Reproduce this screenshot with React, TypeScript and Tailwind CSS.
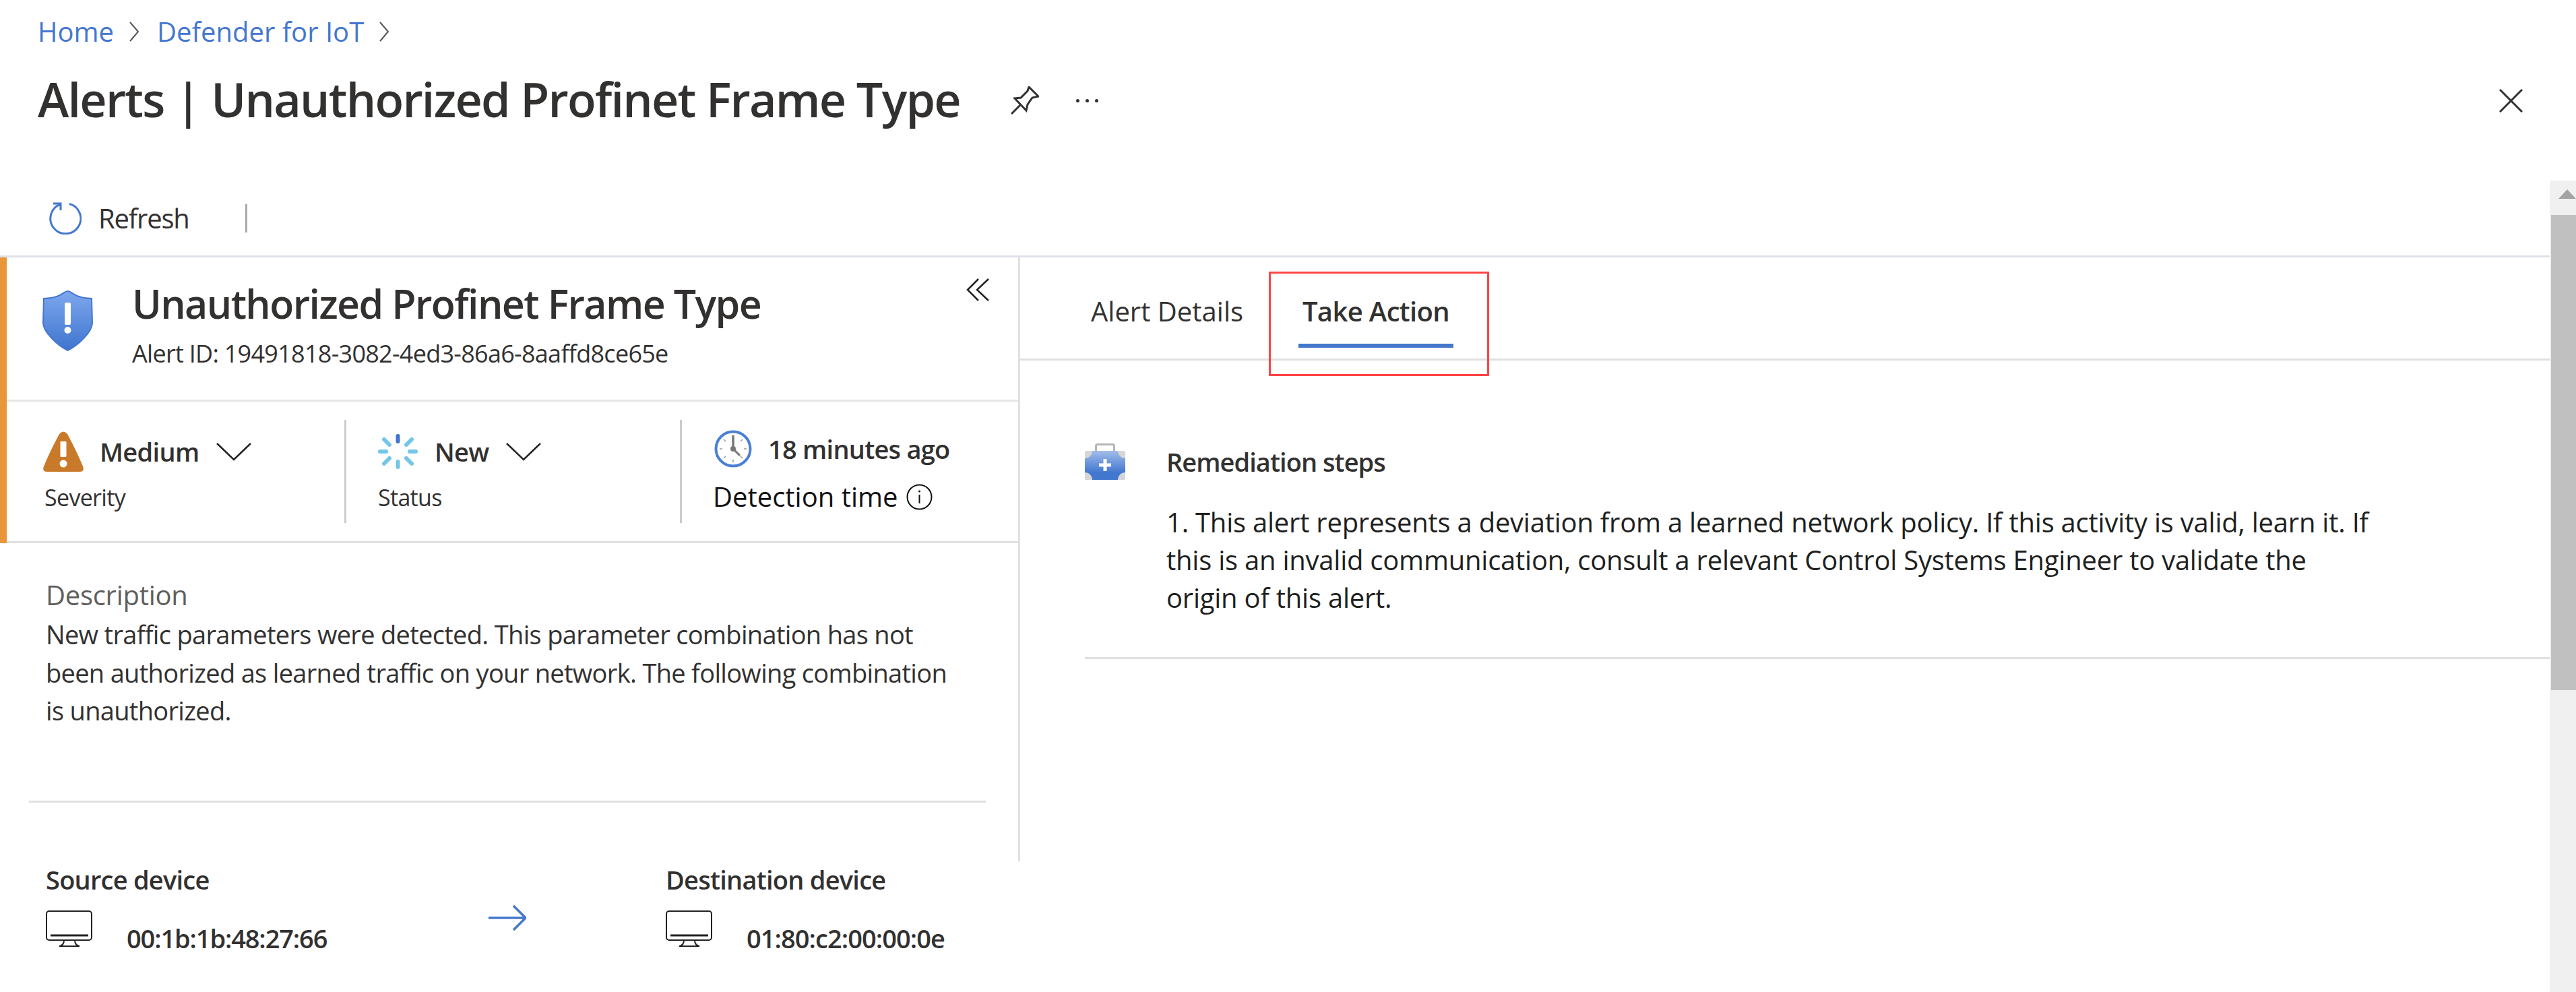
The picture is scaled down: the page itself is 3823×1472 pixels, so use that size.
const Chevron = () => (
    <svg width="52" height="27" viewBox="0 0 52 27" fill="none" stroke="#222" strokeWidth="2.5">
        <polyline points="1,1 26,25 51,1" />
    </svg>
);

const Monitor = () => (
    <svg width="69" height="54" viewBox="0 0 69 54" fill="none" stroke="#222" className="shrink-0">
        <rect x="1" y="1" width="67" height="43" rx="4" strokeWidth="2" />
        <line x1="7" y1="37" x2="63" y2="37" strokeWidth="3" />
        <path d="M27 44 C27 49 25 52 20 53 L50 53 C45 52 43 49 43 44" strokeWidth="2" />
    </svg>
);

const ShieldIcon = () => (
    <svg width="75" height="90" viewBox="0 0 75 90" className="shrink-0">
        <defs>
            <linearGradient id="shieldFill" x1="0" y1="0" x2="0" y2="1">
                <stop offset="0" stopColor="#7ea8ee" />
                <stop offset="1" stopColor="#3f74cf" />
            </linearGradient>
        </defs>
        <path d="M37.5 1 C44 1 46 11 73 12 L74 48 C74 62 52 82 37.5 89 C23 82 1 62 1 48 L2 12 C29 11 31 1 37.5 1 Z" fill="url(#shieldFill)" stroke="#4478d0" strokeWidth="2" />
        <rect x="33" y="18" width="9" height="33" rx="2" fill="#fff" />
        <circle cx="37.5" cy="59" r="5" fill="#fff" />
    </svg>
);

const WarningIcon = () => (
    <svg width="60" height="60" viewBox="0 0 60 60" className="shrink-0">
        <path d="M24 4 Q30 -3 36 4 Q50 30 59 52 Q62 60 54 60 L6 60 Q-2 60 1 52 Q10 30 24 4 Z" fill="#c87a2a" />
        <rect x="25.5" y="15" width="9" height="23" rx="1" fill="#fff" />
        <circle cx="30" cy="48" r="5.5" fill="#fff" />
    </svg>
);

const SpinnerIcon = () => (
    <svg width="59" height="52" viewBox="0 0 59 52" fill="none" stroke="#74c6e8" strokeWidth="6" strokeLinecap="round" className="shrink-0">
        <line x1="29.5" y1="3" x2="29.5" y2="11" stroke="#3f74cf" />
        <line x1="29.5" y1="41" x2="29.5" y2="49" />
        <line x1="3" y1="26" x2="12" y2="26" />
        <line x1="47" y1="26" x2="56" y2="26" />
        <line x1="9" y1="8" x2="17" y2="16" />
        <line x1="50" y1="8" x2="42" y2="16" />
        <line x1="9" y1="44" x2="17" y2="36" />
        <line x1="50" y1="44" x2="42" y2="36" />
    </svg>
);

const ClockIcon = () => (
    <svg width="56" height="56" viewBox="0 0 56 56" fill="none" className="shrink-0">
        <circle cx="28" cy="28" r="25.5" stroke="#4a80d4" strokeWidth="4" fill="#fff" />
        <g stroke="#999" strokeWidth="1.5">
            <line x1="8" y1="28" x2="12" y2="28" />
            <line x1="44" y1="28" x2="48" y2="28" />
            <line x1="28" y1="44" x2="28" y2="48" />
            <line x1="14" y1="14" x2="17" y2="17" />
            <line x1="42" y1="14" x2="39" y2="17" />
            <line x1="14" y1="42" x2="17" y2="39" />
            <line x1="42" y1="42" x2="39" y2="39" />
        </g>
        <line x1="28" y1="8" x2="28" y2="28" stroke="#777" strokeWidth="3.5" />
        <line x1="28" y1="28" x2="38" y2="38" stroke="#777" strokeWidth="3" />
        <circle cx="28" cy="28" r="4" fill="#777" />
    </svg>
);

const InfoIcon = () => (
    <svg width="39" height="39" viewBox="0 0 39 39" fill="none" stroke="#111" className="shrink-0">
        <circle cx="19.5" cy="19.5" r="18" strokeWidth="2" />
        <line x1="19.5" y1="16" x2="19.5" y2="29" strokeWidth="2" />
        <circle cx="19.5" cy="11" r="1.5" fill="#111" stroke="none" />
    </svg>
);

const CaseIcon = () => (
    <svg width="60" height="54" viewBox="0 0 60 54" className="shrink-0">
        <defs>
            <linearGradient id="caseFill" x1="0" y1="0" x2="0" y2="1">
                <stop offset="0" stopColor="#a3bdea" />
                <stop offset="0.75" stopColor="#4277cf" />
            </linearGradient>
        </defs>
        <path d="M16.5 14 L16.5 4 Q16.5 1.5 19 1.5 L41 1.5 Q43.5 1.5 43.5 4 L43.5 14" fill="none" stroke="#b5b5b8" strokeWidth="3" />
        <rect x="0" y="11" width="60" height="43" rx="4" fill="url(#caseFill)" />
        <path d="M0 15 Q0 11 4 11 L11 11 A11 11 0 0 1 0 22 Z" fill="#d6d6d8" />
        <path d="M60 15 Q60 11 56 11 L49 11 A11 11 0 0 0 60 22 Z" fill="#d6d6d8" />
        <path d="M0 50 Q0 54 4 54 L11 54 A11 11 0 0 0 0 43 Z" fill="#d6d6d8" />
        <path d="M60 50 Q60 54 56 54 L49 54 A11 11 0 0 1 60 43 Z" fill="#d6d6d8" />
        <rect x="27.5" y="23" width="5" height="18" fill="#fff" />
        <rect x="21" y="29.5" width="18" height="5" fill="#fff" />
    </svg>
);

const App = () => {
    return (
        <div className="flex flex-col w-[3823px] h-[1472px] overflow-hidden bg-white text-[#323130] font-['Open_Sans',sans-serif]">
            <header className="flex flex-col h-[268px] shrink-0 pl-[56px] pr-[79px]">
                <nav className="flex items-center h-[94px] text-[40px] text-[#4477d0]">
                    <span>Home</span>
                    <svg width="16" height="32" viewBox="0 0 16 32" fill="none" stroke="#555" strokeWidth="2" className="ml-[22px] mr-[26px]"><polyline points="2,2 14,16 2,30" /></svg>
                    <span>Defender for IoT</span>
                    <svg width="16" height="32" viewBox="0 0 16 32" fill="none" stroke="#555" strokeWidth="2" className="ml-[22px]"><polyline points="2,2 14,16 2,30" /></svg>
                </nav>
                <div className="flex items-center h-[110px]">
                    <h1 className="-mt-[4px] text-[70px] font-semibold tracking-[-0.025em] whitespace-nowrap">Alerts | Unauthorized Profinet Frame Type</h1>
                    <svg width="42" height="42" viewBox="0 0 42 42" fill="none" stroke="#323130" strokeWidth="3" className="ml-[75px]">
                        <path d="M27 1 L41 15 L32 17 L25 27 L23 36 L6 18 L15 17 L25 7 Z" />
                        <line x1="1" y1="41" x2="14" y2="28" />
                    </svg>
                    <div className="flex gap-[9px] ml-[55px]">
                        <span className="w-[5px] h-[5px] rounded-full bg-[#323130]" />
                        <span className="w-[5px] h-[5px] rounded-full bg-[#323130]" />
                        <span className="w-[5px] h-[5px] rounded-full bg-[#323130]" />
                    </div>
                    <svg width="35" height="35" viewBox="0 0 35 35" stroke="#323130" strokeWidth="3" className="ml-auto">
                        <line x1="1" y1="1" x2="34" y2="34" />
                        <line x1="34" y1="1" x2="1" y2="34" />
                    </svg>
                </div>
            </header>

            <div className="flex flex-1 min-h-0">
                <div className="flex flex-col flex-1 min-w-0">
                    <div className="flex items-center h-[114px] shrink-0 border-b-[3px] border-[#dfe1e8] pl-[73px]">
                        <svg width="48" height="48" viewBox="0 0 48 48" fill="none" stroke="#4477cc" strokeWidth="3">
                            <path d="M30 2.5 A22.5 22.5 0 1 1 17 3" />
                            <polyline points="6,2 17,2 17,12" />
                        </svg>
                        <span className="ml-[25px] text-[40px] tracking-[-0.03em]">Refresh</span>
                        <div className="w-[3px] h-[42px] ml-[83px] bg-[#aaa]" />
                    </div>

                    <div className="flex flex-1 min-h-0">
                        <div className="flex flex-col w-[1514px] shrink-0">
                            <div className="flex flex-col h-[896px] shrink-0 border-r-[3px] border-[#e0e0e0]">
                                <div className="border-l-[10px] border-[#e9963a]">
                                    <div className="flex h-[214px] border-b-[3px] border-[#e6e6e6] pl-[53px]">
                                        <div className="mt-[49px]"><ShieldIcon /></div>
                                        <div className="flex flex-col ml-[58px] mt-[34px]">
                                            <div className="text-[59px] leading-[68px] font-semibold tracking-[-0.027em] whitespace-nowrap">Unauthorized Profinet Frame Type</div>
                                            <div className="text-[36px] leading-[46px] mt-[18px] tracking-[-0.02em] whitespace-nowrap">Alert ID: 19491818-3082-4ed3-86a6-8aaffd8ce65e</div>
                                        </div>
                                        <svg width="34" height="34" viewBox="0 0 34 34" fill="none" stroke="#222" strokeWidth="2.5" className="ml-auto mr-[43px] mt-[31px]">
                                            <polyline points="18,1 2,17 18,33" />
                                            <polyline points="33,1 16,17 33,33" />
                                        </svg>
                                    </div>
                                    <div className="flex items-center h-[210px] border-b-[3px] border-[#e0e0e0]">
                                        <div className="flex flex-col w-[501px] h-[153px] pl-[54px] pt-[17px]">
                                            <div className="flex items-center h-[60px]">
                                                <WarningIcon />
                                                <span className="ml-[24px] text-[38px] font-semibold tracking-[-0.0175em]">Medium</span>
                                                <span className="ml-[25px]"><Chevron /></span>
                                            </div>
                                            <div className="flex items-center h-[44px] mt-[16px] ml-[2px] text-[34px] tracking-[-0.02em]">Severity</div>
                                        </div>
                                        <div className="w-[3px] h-[153px] bg-[#ccc]" />
                                        <div className="flex flex-col w-[495px] h-[153px] pl-[47px] pt-[17px]">
                                            <div className="flex items-center h-[60px]">
                                                <SpinnerIcon />
                                                <span className="ml-[25px] text-[38px] font-semibold tracking-[-0.0175em]">New</span>
                                                <span className="ml-[25px]"><Chevron /></span>
                                            </div>
                                            <div className="flex items-center h-[44px] mt-[16px] text-[34px] tracking-[-0.02em]">Status</div>
                                        </div>
                                        <div className="w-[3px] h-[153px] bg-[#ccc]" />
                                        <div className="flex flex-col pl-[48px] pt-[13px] h-[153px]">
                                            <div className="flex items-center h-[60px]">
                                                <ClockIcon />
                                                <span className="ml-[24px] text-[38px] font-semibold tracking-[-0.02em] whitespace-nowrap">18 minutes ago</span>
                                            </div>
                                            <div className="flex items-center h-[44px] mt-[19px] -ml-[2px] text-[40px] text-[#111] whitespace-nowrap">
                                                Detection time
                                                <span className="ml-[12px]"><InfoIcon /></span>
                                            </div>
                                        </div>
                                    </div>
                                </div>

                                <div className="flex flex-col pl-[68px] pt-[49px]">
                                    <div className="text-[40px] leading-[56px] text-[#605e5c] tracking-[-0.007em]">Description</div>
                                    <p className="w-[1355px] mt-[2px] text-[38px] leading-[56.5px] tracking-[-0.018em]">
                                        New traffic parameters were detected. This parameter combination has not been authorized as learned traffic on your network. The following combination is unauthorized.
                                    </p>
                                </div>
                                <div className="w-[1420px] h-[3px] ml-[43px] mt-[105px] bg-[#e0e0e0]" />
                            </div>

                            <div className="flex pl-[68px]">
                                <div className="flex flex-col w-[657px] shrink-0">
                                    <div className="flex items-center h-[54px] text-[38px] font-semibold tracking-[-0.02em]">Source device</div>
                                    <div className="flex items-end mt-[19px]">
                                        <Monitor />
                                        <span className="ml-[51px] text-[38px] leading-[26px] font-semibold tracking-[-0.03em]">00:1b:1b:48:27:66</span>
                                    </div>
                                </div>
                                <svg width="56" height="38" viewBox="0 0 56 38" fill="none" stroke="#4477cc" strokeWidth="3.5" className="mt-[65px] shrink-0">
                                    <line x1="0" y1="19" x2="54" y2="19" />
                                    <polyline points="37,1 55,19 37,37" />
                                </svg>
                                <div className="flex flex-col ml-[207px]">
                                    <div className="flex items-center h-[54px] text-[38px] font-semibold tracking-[-0.02em] whitespace-nowrap">Destination device</div>
                                    <div className="flex items-end mt-[19px]">
                                        <Monitor />
                                        <span className="ml-[51px] text-[38px] leading-[26px] font-semibold tracking-[-0.025em] whitespace-nowrap">01:80:c2:00:00:0e</span>
                                    </div>
                                </div>
                            </div>
                        </div>

                        <div className="relative flex flex-col flex-1 min-w-0">
                            <div className="flex h-[153px] shrink-0 border-b-[3px] border-[#e0e0e0] pl-[105px] pt-[52px]">
                                <div className="w-[308px] h-[56px] flex items-center text-[40px]">Alert Details</div>
                                <div className="flex flex-col w-[230px]">
                                    <div className="flex items-center justify-center h-[56px] text-[40px] font-semibold tracking-[-0.016em]">Take Action</div>
                                    <div className="h-[6px] mt-[20px] bg-[#4477cc]" />
                                </div>
                            </div>
                            <div className="absolute left-[369px] top-[21px] w-[327px] h-[155px] border-[3px] border-[#ff4444]" />

                            <div className="flex pl-[96px] pt-[122px]">
                                <div className="mt-[1px]"><CaseIcon /></div>
                                <div className="flex flex-col ml-[61px]">
                                    <div className="h-[56px] flex items-center text-[38px] font-semibold tracking-[-0.025em]">Remediation steps</div>
                                    <p className="w-[1800px] mt-[34px] text-[40px] leading-[56px] tracking-[-0.006em] text-[#201f1e]">
                                        1. This alert represents a deviation from a learned network policy. If this activity is valid, learn it. If this is an invalid communication, consult a relevant Control Systems Engineer to validate the origin of this alert.
                                    </p>
                                </div>
                            </div>
                            <div className="h-[3px] ml-[96px] mt-[60px] bg-[#e0e0e0]" />
                        </div>
                    </div>
                </div>

                <div className="flex flex-col w-[39px] shrink-0 bg-[#f0f0f0]">
                    <div className="flex items-center h-[51px] pl-[13px] pb-[12px]">
                        <svg width="26" height="14" viewBox="0 0 26 14" fill="#a3a3a3"><polygon points="13,0 26,14 0,14" /></svg>
                    </div>
                    <div className="h-[705px] ml-[2px] bg-[#c0c0c0]" />
                </div>
            </div>
        </div>
    );
};

export default App;
